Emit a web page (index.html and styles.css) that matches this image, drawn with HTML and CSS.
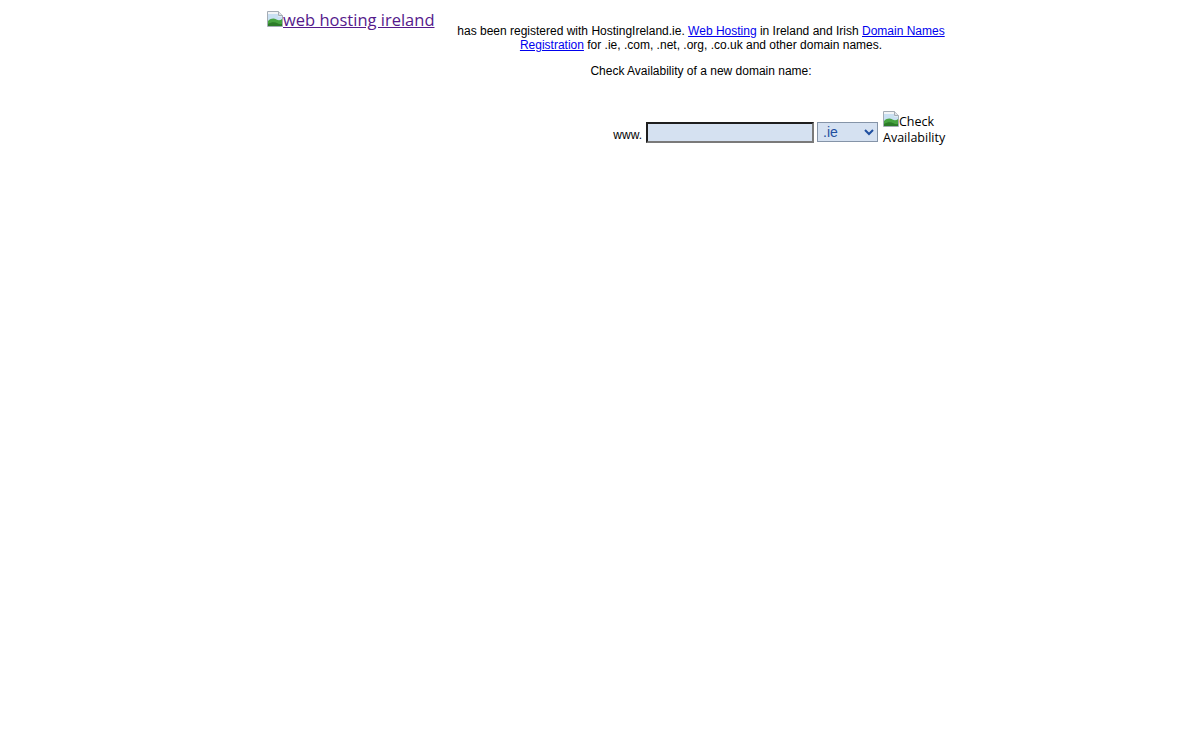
FILE: index.html
```html
<!DOCTYPE html>
<html>
<head>
<meta charset="utf-8">
<title>Domain registered</title>
<link rel="stylesheet" href="styles.css">
</head>
<body>
<div class="page">
  <div class="top">
    <div class="logo-cell">
      <a class="logo" href="#">
        <svg class="broken" width="16" height="16" viewBox="0 0 16 16">
          <path d="M0.5 0.5h11l4 4v11h-15z" fill="#f2f4f6" stroke="#a4acb5"/>
          <path d="M11.5 0.5v4h4" fill="#dfe3e7" stroke="#a4acb5"/>
          <path d="M1 3h10v2.5h4V15H1z" fill="#c9e0f2"/>
          <path d="M1 15V10c3-3 6-3 8.5-1.5 2 1.2 4 0.8 5.5-0.5V15z" fill="#46a33f"/>
          <path d="M1 15v-2c3.5-2.2 7-2.2 9.5-0.7 1.8 1 3.3 1 4.5 0.5V15z" fill="#2c7c28"/>
        </svg><span class="logo-alt">web hosting ireland</span>
      </a>
    </div>
    <div class="text-cell">
      <p class="intro">has been registered with HostingIreland.ie. <a href="#">Web Hosting</a> in Ireland and Irish <a href="#">Domain Names Registration</a> for .ie, .com, .net, .org, .co.uk and other domain names.</p>
      <p class="check">Check Availability of a new domain name:</p>
    </div>
  </div>
  <form class="search">
    <span class="www">www.</span>
    <input class="domain" type="text">
    <select class="tld"><option>.ie</option></select>
    <span class="submit">
      <svg class="broken" width="16" height="16" viewBox="0 0 16 16">
        <path d="M0.5 0.5h11l4 4v11h-15z" fill="#f2f4f6" stroke="#a4acb5"/>
        <path d="M11.5 0.5v4h4" fill="#dfe3e7" stroke="#a4acb5"/>
        <path d="M1 3h10v2.5h4V15H1z" fill="#c9e0f2"/>
        <path d="M1 15V10c3-3 6-3 8.5-1.5 2 1.2 4 0.8 5.5-0.5V15z" fill="#46a33f"/>
        <path d="M1 15v-2c3.5-2.2 7-2.2 9.5-0.7 1.8 1 3.3 1 4.5 0.5V15z" fill="#2c7c28"/>
      </svg>Check<br>Availability
    </span>
  </form>
</div>
</body>
</html>
```
FILE: styles.css
```css
html, body {
  margin: 0;
  padding: 0;
  background: #fff;
}
body {
  font-family: "Liberation Sans", Arial, sans-serif;
  font-size: 12px;
  color: #000;
}
.page {
  width: 678px;
  margin-left: calc(50% - 333px);
  padding-top: 8px;
}
.top {
  display: flex;
}
.logo-cell {
  width: 190px;
  flex: none;
}
.logo {
  color: #551a8b;
  font-family: "Open Sans", "Liberation Sans", sans-serif;
  font-size: 16.5px;
  line-height: 23px;
  text-decoration: underline;
  white-space: nowrap;
}
.broken {
  display: inline-block;
  vertical-align: -1px;
}
.text-cell {
  width: 488px;
  flex: none;
  text-align: center;
  padding-top: 16px;
}
.text-cell p {
  margin: 0;
  line-height: 14px;
}
.text-cell p.check {
  margin-top: 12px;
}
.text-cell a {
  color: #0000ee;
  text-decoration: underline;
}
.search {
  display: flex;
  justify-content: flex-end;
  align-items: flex-end;
  margin: 33px 0 0 0;
}
.www {
  margin-right: 4px;
  line-height: 14px;
  margin-bottom: 4px;
}
.domain {
  box-sizing: border-box;
  width: 168px;
  height: 21px;
  margin: 0 3px 3px 0;
  padding: 1px 3px;
  background: #d5e1f1;
  border: 2px solid;
  border-color: #1e1e1e #7a7a7a #7a7a7a #1e1e1e;
  font-family: "Liberation Sans", Arial, sans-serif;
  font-size: 12px;
}
.tld {
  box-sizing: border-box;
  width: 61px;
  height: 20px;
  margin: 0 5px 4px 0;
  padding: 0 0 0 1px;
  background: #d5e1f1;
  border: 1px solid #8594a8;
  color: #1f4fa0;
  font-family: "Liberation Sans", Arial, sans-serif;
  font-size: 14px;
  border-radius: 0;
}
.submit {
  font-family: "Open Sans", "Liberation Sans", sans-serif;
  font-size: 12.5px;
  line-height: 16px;
  color: #000;
  width: 62px;
  text-align: left;
  white-space: nowrap;
}
```
